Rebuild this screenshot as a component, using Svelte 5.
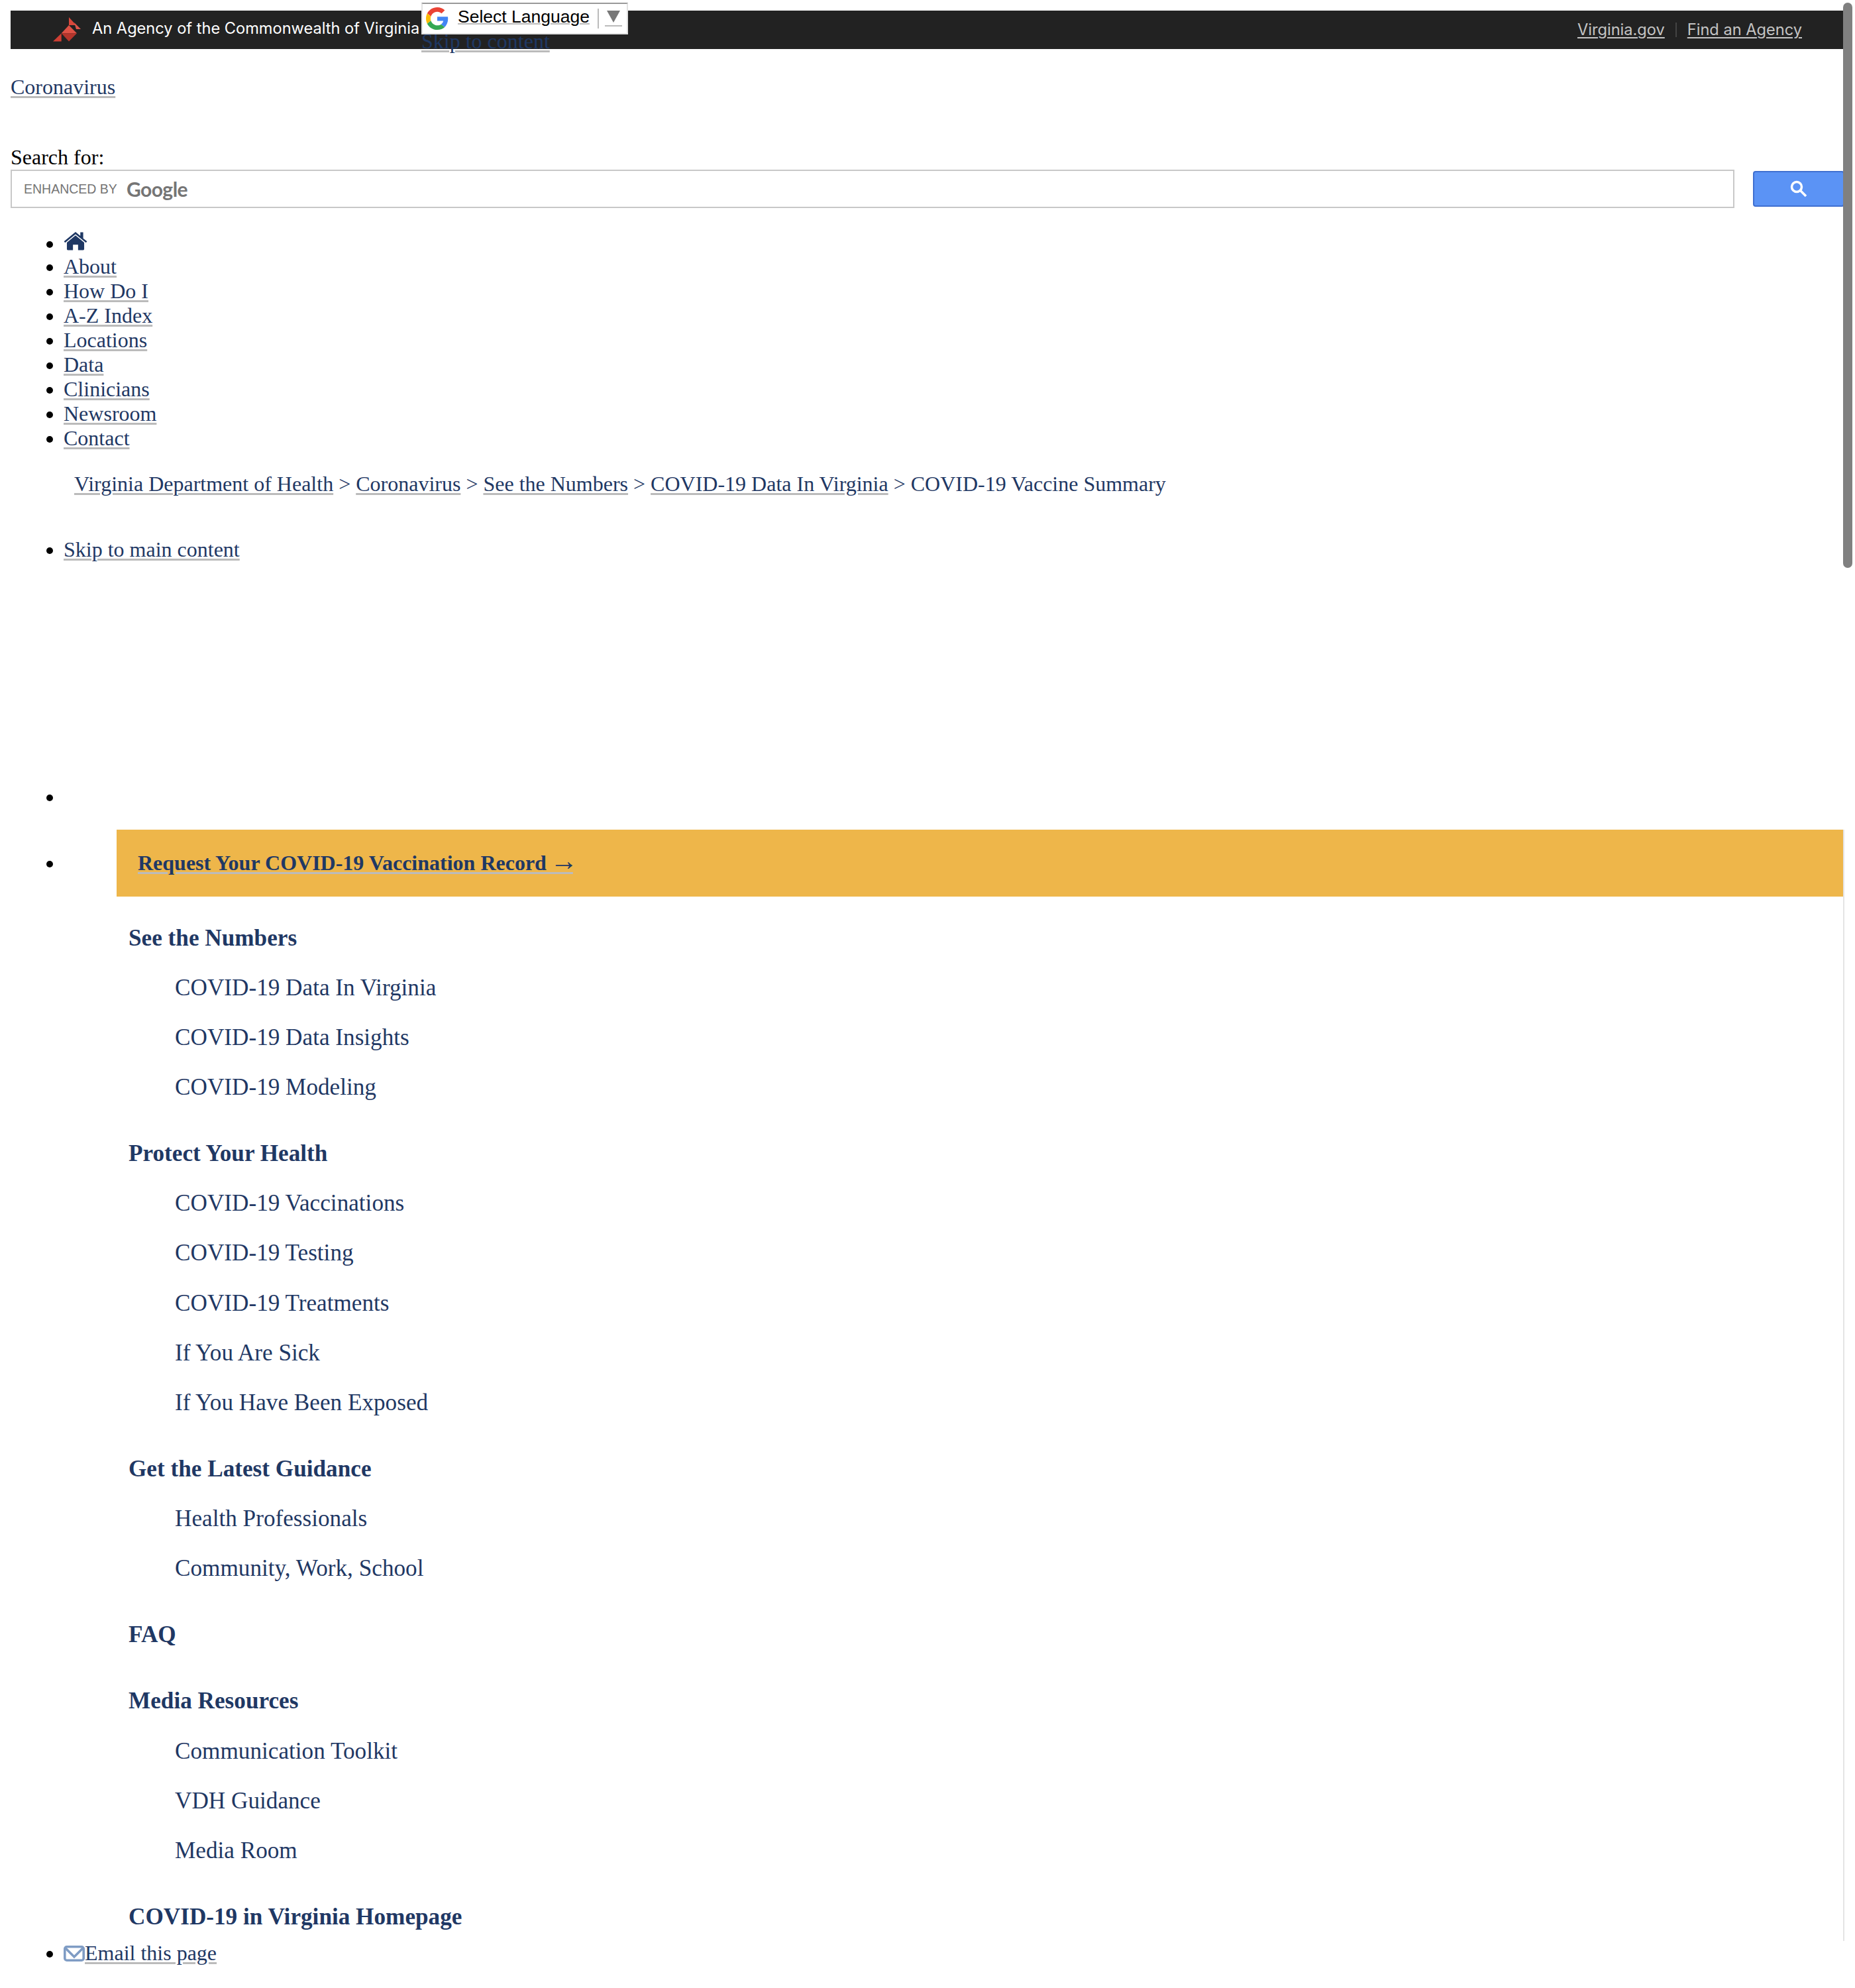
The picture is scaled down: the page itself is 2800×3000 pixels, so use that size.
<script>
  const nav = ['About', 'How Do I', 'A-Z Index', 'Locations', 'Data', 'Clinicians', 'Newsroom', 'Contact'];
  const crumbs = ['Virginia Department of Health', 'Coronavirus', 'See the Numbers', 'COVID-19 Data In Virginia'];
  const groups = [
    { title: 'See the Numbers', items: ['COVID-19 Data In Virginia', 'COVID-19 Data Insights', 'COVID-19 Modeling'] },
    { title: 'Protect Your Health', items: ['COVID-19 Vaccinations', 'COVID-19 Testing', 'COVID-19 Treatments', 'If You Are Sick', 'If You Have Been Exposed'] },
    { title: 'Get the Latest Guidance', items: ['Health Professionals', 'Community, Work, School'] },
    { title: 'FAQ', items: [] },
    { title: 'Media Resources', items: ['Communication Toolkit', 'VDH Guidance', 'Media Room'] },
    { title: 'COVID-19 in Virginia Homepage', items: [] }
  ];
</script>

<div class="page">
  <header class="bar">
    <div class="agency">
      <svg class="cardinal" viewBox="0 0 42 37" width="42" height="37" aria-hidden="true">
        <polygon points="24,0 35,12 24,12" fill="#d9483b"/>
        <polygon points="32,8 42,18 35,18" fill="#e0554a"/>
        <polygon points="0,36.500 12.700,24.300 12.700,36.500" fill="#cf3f34"/>
        <polygon points="24,12 36,24.300 12.700,24.300" fill="#dd5145"/>
        <polygon points="12.700,24.300 36,24.300 24,36.500" fill="#b5352c"/>
      </svg>
      <span class="agency-name">An Agency of the Commonwealth of Virginia</span>
    </div>
    <nav class="bar-links">
      <a href="#a">Virginia.gov</a>
      <i></i>
      <a href="#a">Find an Agency</a>
    </nav>
  </header>

  <a class="skip" href="#a">Skip to content</a>

  <div class="translate">
    <svg viewBox="0 0 48 48" width="34" height="34" aria-hidden="true">
      <path fill="#ea4335" d="M24 9.500c3.500 0 6.700 1.200 9.200 3.600l6.900-6.900C35.900 2.400 30.500 0 24 0 14.600 0 6.500 5.400 2.600 13.200l8 6.200C12.400 13.700 17.700 9.500 24 9.500z"/>
      <path fill="#4285f4" d="M46.900 24.500c0-1.600-.1-3.100-.4-4.500H24v9h12.900c-.6 3-2.200 5.500-4.700 7.200l7.700 6c4.500-4.200 7-10.300 7-17.700z"/>
      <path fill="#fbbc05" d="M10.500 28.600c-.5-1.400-.8-3-.8-4.600s.3-3.200.8-4.600l-8-6.200C.9 16.500 0 20.100 0 24s.9 7.500 2.600 10.800l7.900-6.200z"/>
      <path fill="#34a853" d="M24 48c6.500 0 11.900-2.100 15.900-5.800l-7.700-6c-2.200 1.500-4.900 2.300-8.200 2.300-6.300 0-11.600-4.200-13.500-9.900l-8 6.200C6.500 42.600 14.600 48 24 48z"/>
    </svg>
    <span class="lang">Select Language</span>
    <b></b>
    <span class="arrow"><em></em></span>
  </div>

  <p class="section"><a href="#a">Coronavirus</a></p>

  <label class="search-label" for="q">Search for:</label>
  <div class="search">
    <div class="field" id="q">
      <span class="enh">ENHANCED BY</span>
      <span class="goog">Google</span>
    </div>
    <button aria-label="Search">
      <svg viewBox="0 0 26 26" width="26" height="26">
        <circle cx="10" cy="10" r="7.500" fill="none" stroke="#fff" stroke-width="3.500"/>
        <path d="M15.500 15.500 L24 24" stroke="#fff" stroke-width="3.500"/>
      </svg>
    </button>
  </div>

  <ul class="topnav">
    <li class="home">
      <a href="#a" aria-label="Home">
        <svg viewBox="0 0 36 29" width="36" height="28">
          <path fill="#1f3864" d="M18 5.500 4.500 16.500V27a1.500 1.500 0 0 0 1.500 1.500h8V20h8v8.500h8A1.500 1.500 0 0 0 31.500 27V16.500Z"/>
          <path fill="#1f3864" d="M18 0 0 14.800l1.700 2L18 3.500l16.300 13.300 1.700-2L30 10V.5h-4.500v5.800Z"/>
        </svg>
      </a>
    </li>
    {#each nav as n}
      <li><a href="#a">{n}</a></li>
    {/each}
  </ul>

  <p class="crumbs">
    {#each crumbs as c}<a href="#a">{c}</a>{' > '}{/each}COVID-19 Vaccine Summary
  </p>

  <ul class="skipmain">
    <li><a href="#a">Skip to main content</a></li>
  </ul>

  <ul class="sidebar">
    <li class="empty"></li>
    <li class="menu">
      <div class="cta"><a href="#a">Request Your COVID-19 Vaccination Record <span class="arr">→</span></a></div>
      {#each groups as g, i}
        <div class="group" class:first={i === 0}>
          <h3>{g.title}</h3>
          {#each g.items as item}
            <p class="item">{item}</p>
          {/each}
        </div>
      {/each}
    </li>
    <li class="email">
      <a href="#a">
        <svg viewBox="0 0 32 24" width="32" height="24" aria-hidden="true">
          <rect x="1.800" y="1.800" width="28.400" height="20.400" rx="3" fill="#fff" stroke="#7f9cc4" stroke-width="3.600"/>
          <path d="M3 4 L16 17 L29 4" fill="none" stroke="#7f9cc4" stroke-width="3.600"/>
        </svg>Email this page</a>
    </li>
  </ul>

  <div class="thumb"></div>
</div>

<style>
  :global(body) { margin: 0; background: #fff; }
  .page {
    position: relative;
    box-sizing: border-box;
    width: 2800px;
    height: 3000px;
    padding: 16px 16px 0;
    overflow: hidden;
    font: 32px/37px "Liberation Serif", serif;
    color: #000;
  }
  a { color: #1f3864; text-decoration: underline #bbbbbb 3px; text-underline-offset: 3px; }
  p, ul, h3 { margin: 0; padding: 0; }

  .bar {
    display: flex;
    justify-content: space-between;
    align-items: center;
    height: 58px;
    padding: 0 64px;
    background: #222222;
    font: 23.600px/34px Inter, sans-serif;
    color: #fff;
  }
  .agency { display: flex; align-items: center; gap: 17px; }
  .agency-name { white-space: nowrap; margin-bottom: 4px; }
  .cardinal { flex: none; margin-top: -2px; }
  .bar-links { display: flex; align-items: center; gap: 16px; }
  .bar-links a { color: #c4c4c4; text-decoration: underline #c4c4c4 2px; text-underline-offset: 3px; }
  .bar-links i { width: 2px; height: 22px; background: #444; }

  .skip { position: absolute; left: 636px; top: 44px; }

  .translate {
    position: absolute;
    left: 636px;
    top: 4px;
    box-sizing: border-box;
    width: 312px;
    height: 48px;
    display: flex;
    align-items: center;
    background: #fff;
    border: 2px solid #e2e2e2;
    border-top-color: #999;
  }
  .translate svg { flex: none; margin-left: 5px; }
  .lang {
    flex: none;
    margin: 0 0 6px 14px;
    font: 26.500px/34px "Liberation Sans", sans-serif;
    white-space: nowrap;
    text-decoration: underline #bbb 2px;
    color: #000;
  }
  .translate b { flex: none; width: 2px; height: 30px; margin-left: 12px; background: #bbb; }
  .arrow {
    flex: none;
    box-sizing: border-box;
    width: 26px;
    height: 25px;
    margin: 0 0 2px 9px;
    padding: 0 3px;
    border-bottom: 2px solid #bbb;
  }
  .arrow em {
    display: block;
    width: 0;
    height: 0;
    margin-top: 1px;
    border-left: 10px solid transparent;
    border-right: 10px solid transparent;
    border-top: 18px solid #777;
  }

  .section { margin-top: 39px; }
  .search-label { display: block; margin-top: 69px; }
  .search { display: flex; justify-content: space-between; align-items: center; height: 58px; }
  .field {
    box-sizing: border-box;
    width: 2602px;
    height: 58px;
    display: flex;
    align-items: center;
    padding-left: 18px;
    border: 2px solid #c8c8c8;
    color: #757575;
  }
  .enh { font: 19.500px/24px "Liberation Sans", sans-serif; }
  .goog { margin-left: 14px; font: 700 30px/36px Lato, sans-serif; letter-spacing: -0.5px; }
  button {
    box-sizing: border-box;
    width: 138px;
    height: 54px;
    display: flex;
    align-items: center;
    justify-content: center;
    padding: 0;
    background: #5b93f5;
    border: 2px solid #3f6fd0;
    border-radius: 4px;
  }

  ul { padding-left: 80px; }
  .topnav { margin-top: 33px; }
  .home { height: 37px; }
  .home svg { display: block; padding-top: 3px; }

  .crumbs { margin-top: 32px; padding-left: 96px; color: #1f3864; }
  .skipmain { margin-top: 62px; }

  .sidebar { margin-top: 336px; }
  .empty { height: 37px; }
  .menu { margin-top: 31px; padding-bottom: 15.500px; border-right: 2px solid #e5e5e5; }
  .cta {
    box-sizing: border-box;
    height: 101px;
    margin-left: 80px;
    padding: 32px 32px 0;
    background: #eeb64a;
    font-weight: bold;
  }
  .arr { margin-left: -3px; font-size: 42px; line-height: 0; font-weight: 400; letter-spacing: -7px; }
  .group { padding-left: 98px; }
  .group h3 { padding-top: 58px; font-size: 35.200px; line-height: 42px; color: #1f3864; }
  .group.first h3 { padding-top: 41.500px; }
  .item { margin-top: 33.200px; padding-left: 70px; font-size: 35.200px; line-height: 42px; color: #1f3864; }
  .email svg { vertical-align: -2px; }

  .thumb {
    position: absolute;
    left: 2782px;
    top: 4px;
    width: 14px;
    height: 853px;
    border-radius: 7px;
    background: #808080;
  }
</style>
